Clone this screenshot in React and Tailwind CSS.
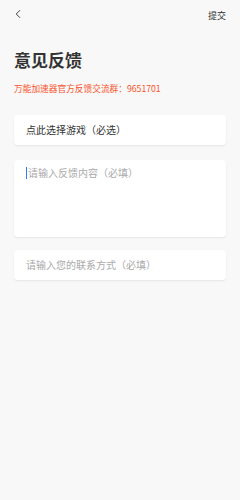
import { ChevronLeft } from "lucide-react";

// Feedback page
export default function App() {
  return (
    <div
      className="w-[240px] h-[500px] bg-[#f8f8f8] text-[#333]"
      style={{ fontFamily: '"Noto Sans CJK SC", "Noto Sans", sans-serif' }}
    >
      {/* top bar */}
      <div className="flex items-center justify-between h-[28px] pl-[11px] pr-[14px]">
        <ChevronLeft size={14} strokeWidth={1.6} className="text-[#333]" />
        <span className="text-[9px] leading-none mt-[2px]">提交</span>
      </div>

      <div className="px-[14px]">
        <h1 className="mt-[22px] text-[17px] leading-[20px] font-bold">意见反馈</h1>
        <p className="mt-[13px] text-[8.7px] leading-[12px] text-[#f8532a]">
          万能加速器官方反馈交流群：9651701
        </p>

        <div className="mt-[20px] flex flex-col">
          <div className="h-[30px] bg-white rounded-[4px] shadow-[0_1px_2px_rgba(0,0,0,0.08)] flex items-center px-[12px]">
            <span className="text-[10px] leading-none">点此选择游戏（必选）</span>
          </div>

          <div className="mt-[15px] h-[77px] bg-white rounded-[4px] shadow-[0_1px_2px_rgba(0,0,0,0.08)] px-[12px] pt-[7px]">
            <div className="flex items-center h-[12px]">
              <span className="w-[1px] h-[12px] bg-[#2f7cf6]" />
              <span className="ml-[1px] text-[10px] leading-none text-[#aaa]">请输入反馈内容（必填）</span>
            </div>
          </div>

          <div className="mt-[13px] h-[30px] bg-white rounded-[4px] shadow-[0_1px_2px_rgba(0,0,0,0.08)] flex items-center px-[12px]">
            <span className="text-[10px] leading-none text-[#aaa]">请输入您的联系方式（必填）</span>
          </div>
        </div>
      </div>
    </div>
  );
}
